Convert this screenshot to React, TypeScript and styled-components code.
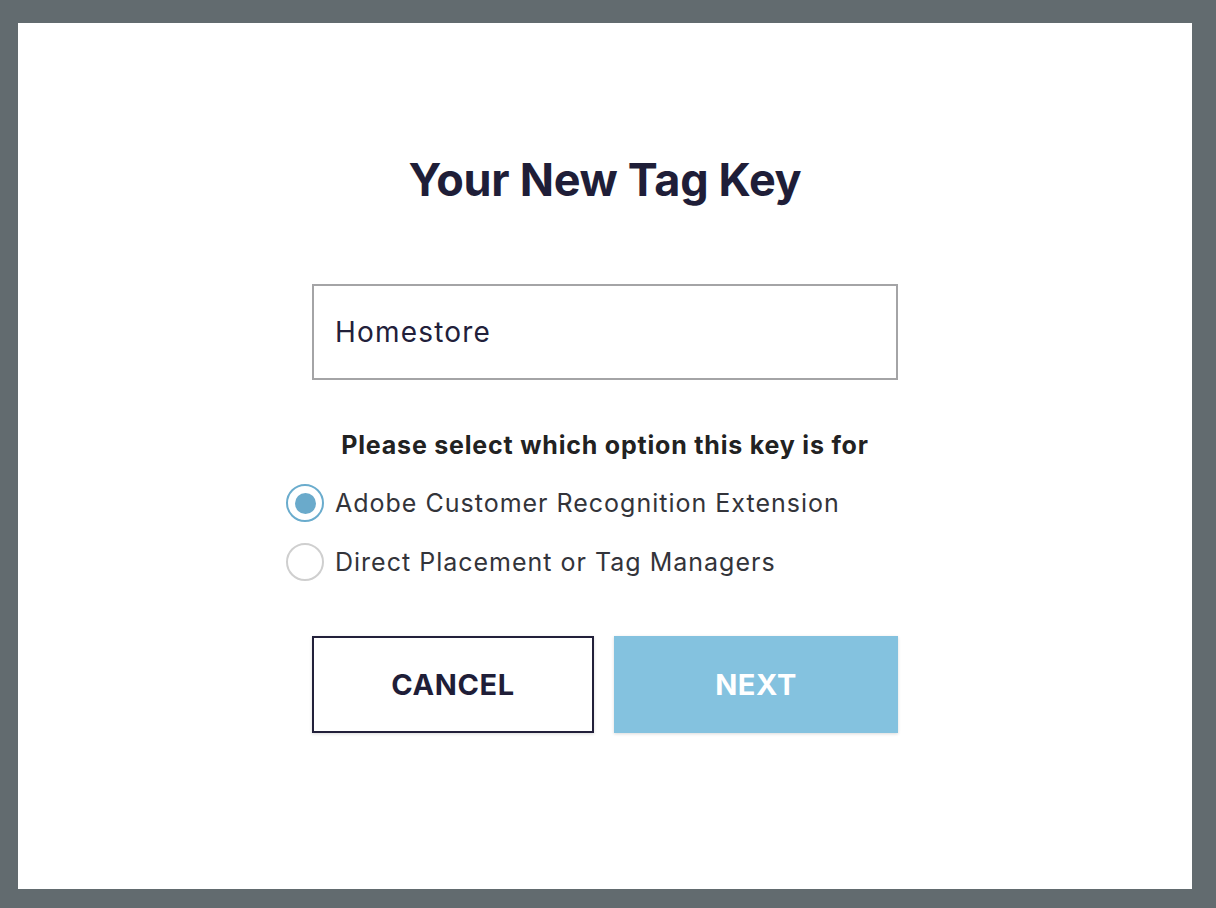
import React, { useState } from "react";
import styled, { createGlobalStyle } from "styled-components";

const Global = createGlobalStyle`
  html, body {
    margin: 0;
    padding: 0;
    background: #626b6f;
    font-family: Inter, "Noto Sans", sans-serif;
  }
  * { box-sizing: border-box; }
`;

const Backdrop = styled.div`
  width: 1216px;
  height: 908px;
  padding: 23px 24px 19px 18px;
  background: #626b6f;
`;

const Modal = styled.div`
  width: 100%;
  height: 100%;
  background: #ffffff;
  display: flex;
  flex-direction: column;
  align-items: center;
  padding-top: 129px;
`;

const Title = styled.h1`
  margin: 0;
  font-size: 45px;
  line-height: 56px;
  font-weight: 700;
  color: #1f1e38;
  letter-spacing: -0.3px;
`;

const Column = styled.div`
  width: 586px;
  display: flex;
  flex-direction: column;
  margin-top: 76px;
`;

const KeyInput = styled.input`
  width: 100%;
  height: 96px;
  border: 2px solid #a4a4a6;
  padding: 0 21px;
  font-family: inherit;
  font-size: 28px;
  letter-spacing: 1.2px;
  color: #22203a;
  outline: none;
`;

const Prompt = styled.p`
  margin: 48px 0 0;
  text-align: center;
  font-size: 25px;
  line-height: 34px;
  font-weight: 700;
  letter-spacing: 0.8px;
  color: #222222;
`;

const Options = styled.div`
  margin: 22px 0 0 -26px;
  display: flex;
  flex-direction: column;
  gap: 21px;
`;

const Option = styled.label`
  display: flex;
  align-items: center;
  gap: 11px;
  font-size: 25px;
  line-height: 38px;
  letter-spacing: 1px;
  color: #33343a;
  cursor: pointer;
`;

const Radio = styled.span<{ $checked: boolean }>`
  width: 38px;
  height: 38px;
  flex-shrink: 0;
  border-radius: 50%;
  border: 2px solid ${(p) => (p.$checked ? "#6aaccd" : "#cfcfcf")};
  display: flex;
  align-items: center;
  justify-content: center;
  &::after {
    content: "";
    width: 21px;
    height: 21px;
    border-radius: 50%;
    background: ${(p) => (p.$checked ? "#6aaacb" : "transparent")};
  }
`;

const Buttons = styled.div`
  display: flex;
  gap: 20px;
  margin-top: 55px;
`;

const Button = styled.button<{ $primary?: boolean }>`
  width: ${(p) => (p.$primary ? "284px" : "282px")};
  height: 97px;
  font-family: inherit;
  font-size: 29px;
  font-weight: 700;
  letter-spacing: 0.6px;
  border: ${(p) => (p.$primary ? "none" : "2px solid #22203a")};
  background: ${(p) => (p.$primary ? "#84c2df" : "#ffffff")};
  color: ${(p) => (p.$primary ? "#ffffff" : "#1f1e38")};
  box-shadow: 0 1px 3px rgba(0, 0, 0, 0.15);
  cursor: pointer;
`;

const options = [
  "Adobe Customer Recognition Extension",
  "Direct Placement or Tag Managers",
];

export default function App() {
  const [picked, setPicked] = useState(0);
  return (
    <>
      <Global />
      <Backdrop>
        <Modal>
          <Title>Your New Tag Key</Title>
          <Column>
            <KeyInput defaultValue="Homestore" />
            <Prompt>Please select which option this key is for</Prompt>
            <Options>
              {options.map((o, i) => (
                <Option key={o} onClick={() => setPicked(i)}>
                  <Radio $checked={picked === i} />
                  {o}
                </Option>
              ))}
            </Options>
            <Buttons>
              <Button>CANCEL</Button>
              <Button $primary>NEXT</Button>
            </Buttons>
          </Column>
        </Modal>
      </Backdrop>
    </>
  );
}
